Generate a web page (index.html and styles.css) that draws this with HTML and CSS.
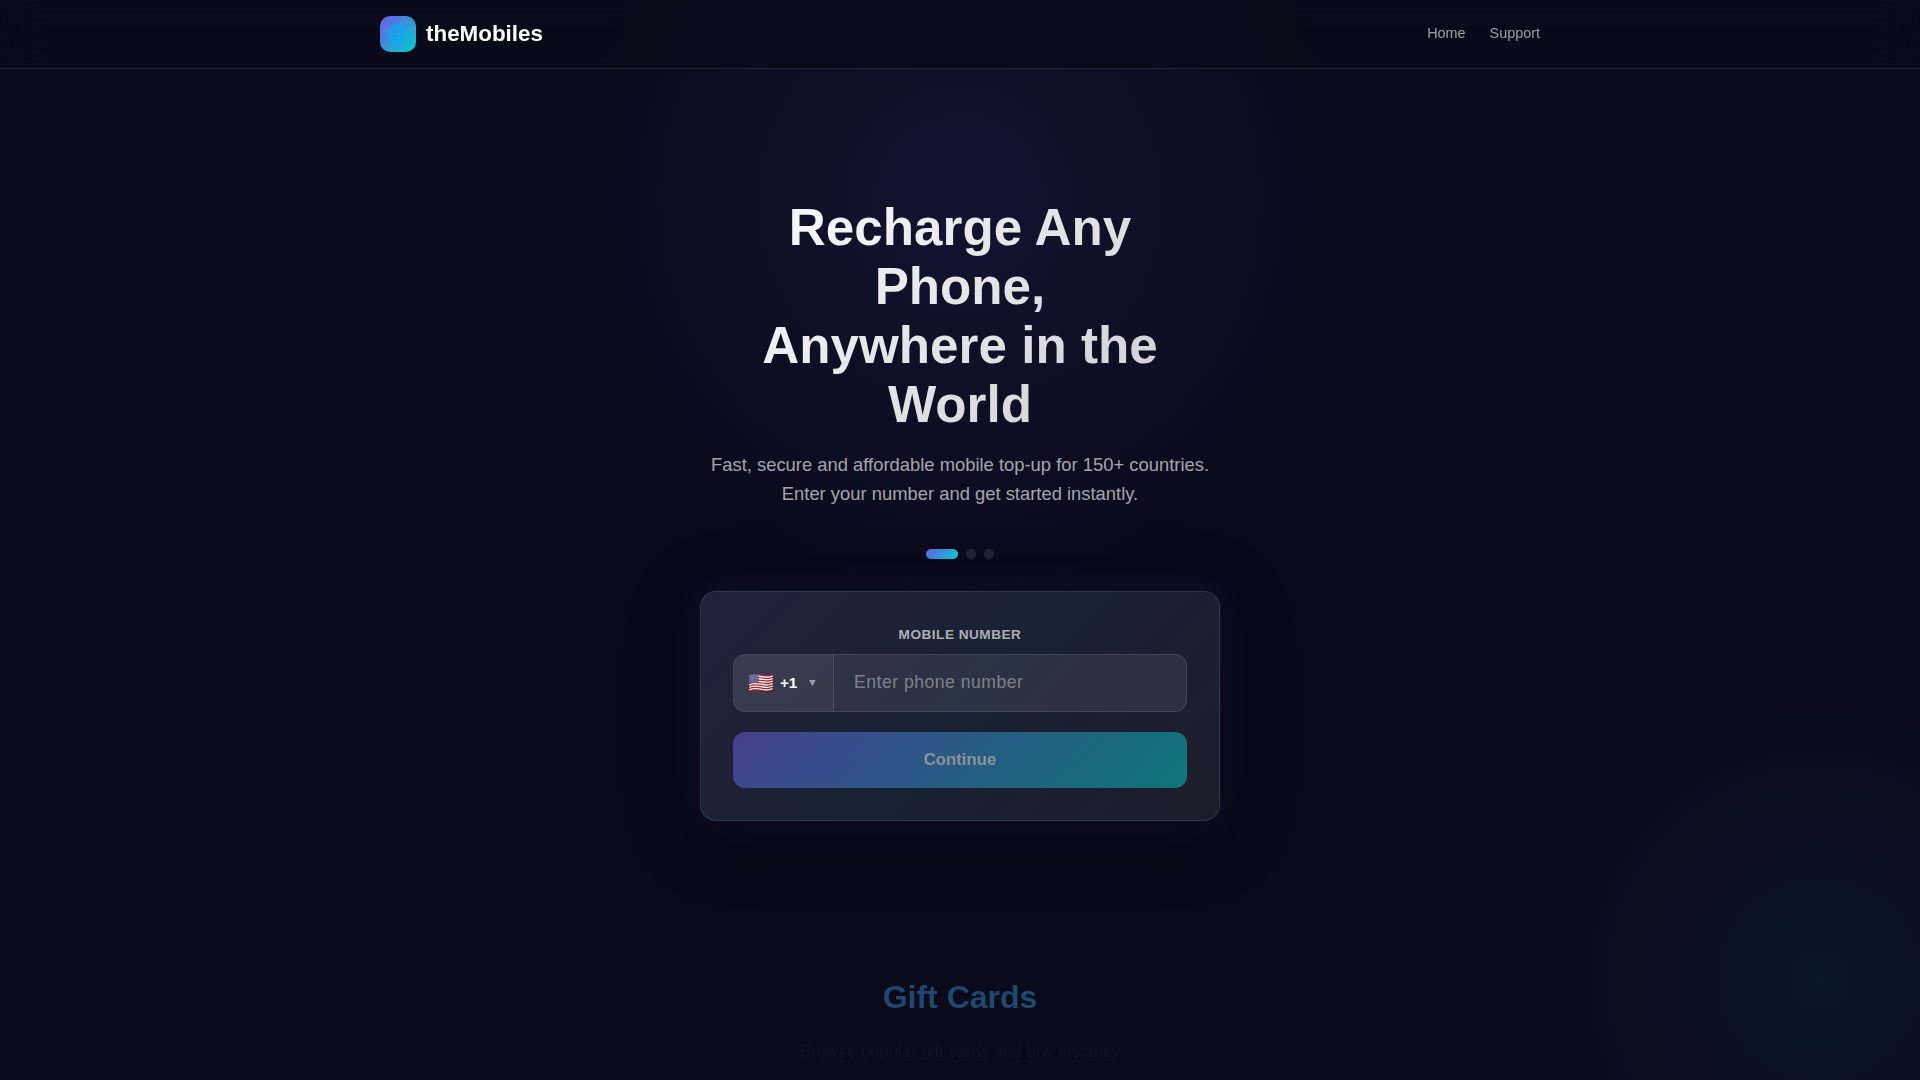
FILE: index.html
```html
<!DOCTYPE html>
<html lang="en">
<head>
<meta charset="utf-8">
<title>theMobiles</title>
<link rel="stylesheet" href="styles.css">
</head>
<body>
<header class="header">
  <div class="container header-inner">
    <a class="logo" href="#"><span class="logo-icon">🌐</span><span>theMobiles</span></a>
    <nav class="nav"><a href="#">Home</a><a href="#">Support</a></nav>
  </div>
</header>
<main>
  <section class="hero">
    <h1>Recharge Any Phone,<br>Anywhere in the World</h1>
    <p class="lead">Fast, secure and affordable mobile top-up for 150+ countries. Enter your number and get started instantly.</p>
    <div class="steps"><span class="step active"></span><span class="step"></span><span class="step"></span></div>
    <form class="card">
      <label class="label" for="phone">Mobile Number</label>
      <div class="phone-row">
        <div class="country"><span class="flag">🇺🇸</span><span class="code">+1</span><span class="arrow">▼</span></div>
        <input id="phone" class="phone" type="tel" placeholder="Enter phone number">
      </div>
      <button class="submit" type="button">Continue</button>
    </form>
  </section>
  <section class="container gifts">
    <h2>Gift Cards</h2>
    <p>Browse popular gift cards and buy instantly</p>
  </section>
</main>
</body>
</html>
```
FILE: styles.css
```css
* { margin: 0; padding: 0; box-sizing: border-box; }
body {
  height: 1080px;
  background:
    radial-gradient(circle 566px at 960px 200px, rgba(108, 92, 231, .11) 0%, transparent 70%),
    radial-gradient(circle 424px at 1820px 980px, rgba(0, 206, 201, .065) 0%, transparent 68%),
    #0a0a1a;
  color: #fff;
  font-family: "Liberation Sans", Arial, sans-serif;
  line-height: 1.6;
}
a { color: inherit; text-decoration: none; }
.container { width: 1200px; margin: 0 auto; padding: 0 20px; }
.header {
  padding: 16px 0;
  background: rgba(10, 10, 26, .9);
  backdrop-filter: blur(20px);
  border-bottom: 1px solid rgba(255, 255, 255, .1);
}
.header-inner { display: flex; align-items: center; justify-content: space-between; height: 36px; }
.logo { display: flex; align-items: center; gap: 10px; font-size: 22.4px; font-weight: 700; }
.logo-icon {
  display: flex;
  align-items: center;
  justify-content: center;
  width: 36px;
  height: 36px;
  border-radius: 10px;
  background: linear-gradient(135deg, #6c5ce7, #00cec9);
  font-size: 17.6px;
}
.nav { display: flex; gap: 24px; font-size: 14.4px; color: rgba(255, 255, 255, .6); }
.hero { width: 520px; margin: 0 auto; padding-top: 130px; text-align: center; }
h1 {
  font-size: 51.2px;
  line-height: 1.15;
  font-weight: 800;
  margin-bottom: 15.4px;
  background: linear-gradient(135deg, #fff, rgba(255, 255, 255, .78));
  -webkit-background-clip: text;
  background-clip: text;
  color: transparent;
}
.lead { font-size: 18.4px; color: rgba(255, 255, 255, .64); margin-bottom: 40.4px; }
.steps { display: flex; justify-content: center; gap: 8px; margin-bottom: 32px; }
.step { width: 10px; height: 10px; border-radius: 5px; background: rgba(255, 255, 255, .1); }
.step.active { width: 32px; background: linear-gradient(135deg, #6c5ce7, #00cec9); }
.card {
  padding: 32px;
  border: 1px solid rgba(255, 255, 255, .1);
  border-radius: 16px;
  background:
    linear-gradient(135deg, rgba(108, 92, 231, .1), rgba(0, 206, 201, .05) 50%, rgba(253, 121, 168, .015)),
    rgba(255, 255, 255, .065);
  box-shadow: 0 12px 74px rgba(0, 0, 0, .25), 0 0 40px rgba(108, 92, 231, .11);
}
.label {
  display: block;
  margin-bottom: 8px;
  font-size: 13.6px;
  font-weight: 600;
  letter-spacing: .5px;
  text-transform: uppercase;
  color: rgba(255, 255, 255, .65);
}
.phone-row {
  display: flex;
  height: 58px;
  margin-bottom: 20px;
  overflow: hidden;
  border: 1px solid rgba(255, 255, 255, .1);
  border-radius: 12px;
  background: rgba(255, 255, 255, .08);
}
.country {
  display: flex;
  align-items: center;
  gap: 6px;
  width: 100px;
  padding-left: 14px;
  background: rgba(255, 255, 255, .04);
  border-right: 1px solid rgba(255, 255, 255, .1);
}
.flag { font-size: 20.8px; }
.code { font-size: 15.2px; font-weight: 600; }
.arrow { margin-left: 4px; font-size: 10.4px; color: rgba(255, 255, 255, .5); }
.phone {
  flex: 1;
  min-width: 0;
  padding: 0 20px 1px;
  border: 0;
  background: none;
  color: #fff;
  font: 17.6px "Liberation Sans", Arial, sans-serif;
  letter-spacing: .5px;
}
.phone::placeholder { color: rgba(255, 255, 255, .4); }
.submit {
  display: block;
  width: 100%;
  padding: 18px;
  border: 0;
  border-radius: 12px;
  background: linear-gradient(135deg, #6c5ce7, #00cec9);
  color: #fff;
  font: 700 16.8px "Liberation Sans", Arial, sans-serif;
  opacity: .5;
}
.gifts { margin-top: 151px; text-align: center; }
h2 {
  font-size: 32px;
  margin-bottom: 15.5px;
  background: linear-gradient(135deg, #6c5ce7, #00cec9);
  -webkit-background-clip: text;
  background-clip: text;
  color: transparent;
  opacity: .45;
}
.gifts p { font-size: 16.8px; color: #12111f; }
```
